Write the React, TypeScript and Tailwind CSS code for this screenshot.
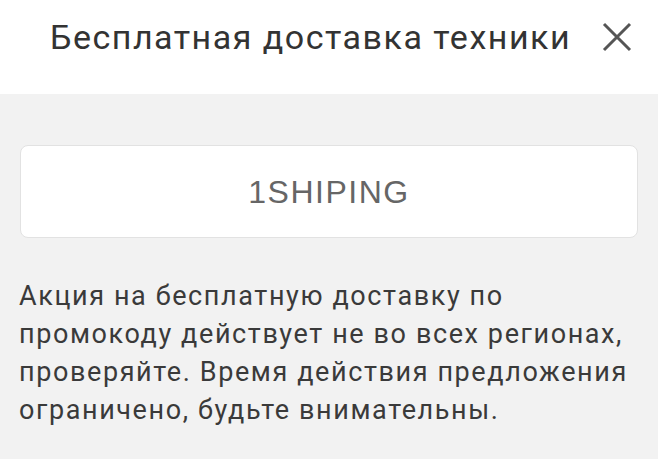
import React from "react";

export default function App() {
  return (
    <div className="w-[658px] h-[459px] overflow-hidden bg-[#f2f2f2]" style={{ fontFamily: "Roboto, 'Noto Sans', sans-serif" }}>
      <div className="h-[94px] bg-white flex items-start justify-end pt-[13px] pr-[26px] gap-[31px]">
        <div className="text-[34px] leading-[48px] tracking-[1.5px] text-[#333]">Бесплатная доставка техники</div>
        <svg width="30" height="30" viewBox="0 0 30 30" className="mt-[9px]">
          <path d="M2 2 L28 28 M28 2 L2 28" stroke="#555" strokeWidth="3" strokeLinecap="butt" />
        </svg>
      </div>
      <div className="px-[20px] pt-[51px]">
        <div className="h-[93px] bg-white border border-[#e2e2e2] rounded-[8px] flex items-center justify-center text-[32px] tracking-[1.5px] text-[#666]" style={{ fontFamily: "'Liberation Sans', Arial, sans-serif" }}>
          1SHIPING
        </div>
        <p className="mt-[39px] text-[27px] leading-[38px] tracking-[1.6px] text-[#3a3a3a] -ml-[1px] -mr-[14px]">
          Акция на бесплатную доставку по промокоду действует не во всех регионах, проверяйте. Время действия предложения ограничено, будьте внимательны.
        </p>
      </div>
    </div>
  );
}
